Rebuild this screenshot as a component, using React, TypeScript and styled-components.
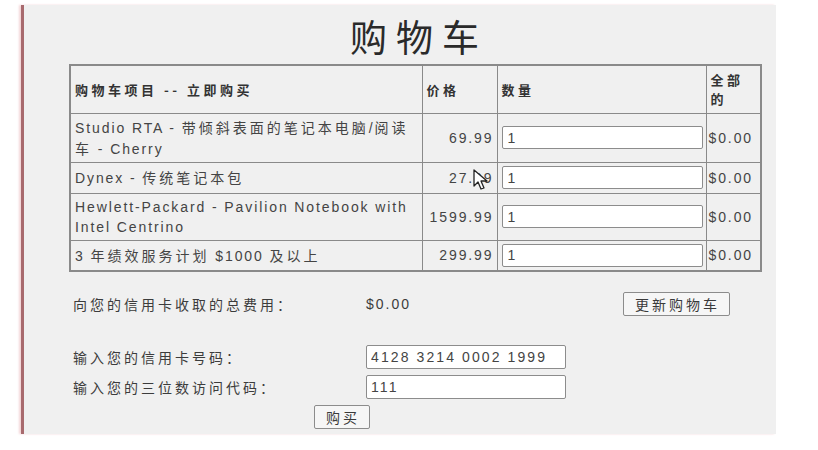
import React from "react";
import styled, { createGlobalStyle } from "styled-components";

const GlobalStyle = createGlobalStyle`
  html, body { margin: 0; padding: 0; background: #ffffff; }
  body { font-family: "Liberation Sans", "Noto Sans CJK SC", sans-serif; }
`;

const Page = styled.div`
  padding: 5px 0 0 21px;
  width: 818px;
  height: 450px;
  box-sizing: border-box;
`;

const Panel = styled.div`
  width: 755px;
  height: 429px;
  box-sizing: border-box;
  background: #f0f0f0;
  border-left: 3px solid #a86a6e;
  box-shadow: -2px 0 2px #f3d6d8;
  padding-left: 45px;
  color: #3c3c3c;
`;

const Content = styled.div`
  width: 691px;
`;

const Title = styled.h1`
  margin: 0;
  height: 59px;
  box-sizing: border-box;
  padding: 9px 0 0 9px;
  text-align: center;
  font-family: "Noto Sans CJK SC", sans-serif;
  font-weight: 400;
  font-size: 37px;
  line-height: 44px;
  letter-spacing: 9px;
  color: #2a2a2a;
`;

const Table = styled.table`
  width: 691px;
  border-collapse: collapse;
  border: 2px solid #8a8a8a;
  table-layout: fixed;
  font-size: 14px;
  letter-spacing: 1.9px;
`;

const Col = styled.col<{ $w: number }>`
  width: ${(p) => p.$w}px;
`;

const Row = styled.tr<{ $h: number }>`
  height: ${(p) => p.$h}px;
`;

const Th = styled.th`
  border: 1px solid #8a8a8a;
  text-align: left;
  padding: 0 4px;
  font-family: "Noto Sans CJK SC", sans-serif;
  font-weight: 700;
  font-size: 13px;
  line-height: 19px;
  letter-spacing: 3.5px;
  color: #333;
`;

const Td = styled.td<{ $align?: string; $pad?: string }>`
  border: 1px solid #8a8a8a;
  padding: ${(p) => p.$pad || "0 4px"};
  text-align: ${(p) => p.$align || "left"};
  line-height: 20px;
  color: #444;
  position: relative;
`;

const Cjk = styled.span`
  font-family: "Noto Sans CJK SC", sans-serif;
  letter-spacing: 3px;
`;

const QtyInput = styled.input`
  display: block;
  width: 100%;
  height: 23px;
  box-sizing: border-box;
  border: 1px solid #8c8c8c;
  border-radius: 2px;
  background: #fff;
  padding: 0 5px;
  font-family: "Liberation Sans", sans-serif;
  font-size: 14px;
  color: #444;
`;

const Cursor = styled.svg`
  position: absolute;
  left: 50px;
  top: 6px;
`;

const Form = styled.div`
  display: grid;
  grid-template-columns: 293px 200px 1fr;
  padding-left: 4px;
  margin-top: 20px;
  font-size: 14px;
  letter-spacing: 2px;
  color: #3c3c3c;
  align-items: center;
`;

const Label = styled.div`
  font-family: "Noto Sans CJK SC", sans-serif;
  font-size: 14px;
  letter-spacing: 3px;
`;

const Amount = styled.div`
  font-size: 14px;
`;

const Button = styled.button<{ $align?: string; $mr?: number }>`
  justify-self: ${(p) => p.$align || "start"};
  margin-right: ${(p) => p.$mr || 0}px;
  height: 24px;
  padding: 0 9px 0 11px;
  border: 1px solid #8c8c8c;
  border-radius: 2px;
  background: #f6f6f6;
  font-family: "Noto Sans CJK SC", sans-serif;
  font-size: 14px;
  letter-spacing: 3px;
  color: #3a3a3a;
`;

const FieldInput = styled.input`
  width: 200px;
  height: 24px;
  box-sizing: border-box;
  border: 1px solid #8c8c8c;
  border-radius: 2px;
  background: #fff;
  padding: 0 4px;
  font-family: "Liberation Sans", sans-serif;
  font-size: 14px;
  letter-spacing: 2.1px;
  color: #444;
`;

const Spacer = styled.div<{ $h: number }>`
  grid-column: 1 / -1;
  height: ${(p) => p.$h}px;
`;

const BuyRow = styled.div`
  grid-column: 1 / -1;
  padding-left: 241px;
  margin-top: 6px;
`;

function Mixed({ text }: { text: string }) {
  const parts = text.split(/([\u3000-\u9fff\uff00-\uffef]+)/);
  return (
    <>
      {parts.map((p, i) =>
        /[\u3000-\u9fff\uff00-\uffef]/.test(p) ? <Cjk key={i}>{p}</Cjk> : <React.Fragment key={i}>{p}</React.Fragment>
      )}
    </>
  );
}

const rows = [
  { name: "Studio RTA - 带倾斜表面的笔记本电脑/阅读车 - Cherry", price: "69.99", h: 49 },
  { name: "Dynex - 传统笔记本包", price: "27.99", h: 31, cursor: true },
  { name: "Hewlett-Packard - Pavilion Notebook with Intel Centrino", price: "1599.99", h: 47 },
  { name: "3 年绩效服务计划 $1000 及以上", price: "299.99", h: 31 },
];

export default function App() {
  return (
    <>
      <GlobalStyle />
      <Page>
        <Panel>
          <Content>
            <Title>购物车</Title>
            <Table>
              <colgroup>
                <Col $w={352} />
                <Col $w={75} />
                <Col $w={209} />
                <Col $w={55} />
              </colgroup>
              <thead>
                <Row $h={48}>
                  <Th>购物车项目 -- 立即购买</Th>
                  <Th>价格</Th>
                  <Th>数量</Th>
                  <Th>全部的</Th>
                </Row>
              </thead>
              <tbody>
                {rows.map((r) => (
                  <Row $h={r.h} key={r.name}>
                    <Td>
                      <Mixed text={r.name} />
                    </Td>
                    <Td $align="right" $pad="0 3px 0 2px">
                      {r.price}
                      {r.cursor && (
                        <Cursor width="20" height="24" viewBox="0 0 20 24">
                          <path
                            d="M1 1 L1 17 L5 13 L8 20 L11 19 L8 12 L14 12 Z"
                            fill="#fff"
                            stroke="#222"
                            strokeWidth="1.3"
                            strokeLinejoin="round"
                          />
                        </Cursor>
                      )}
                    </Td>
                    <Td $pad="0 3px 0 4px">
                      <QtyInput defaultValue="1" />
                    </Td>
                    <Td $pad="0 2px 0 2px">$0.00</Td>
                  </Row>
                ))}
              </tbody>
            </Table>
            <Form>
              <Label>向您的信用卡收取的总费用：</Label>
              <Amount>$0.00</Amount>
              <Button $align="end" $mr={30}>更新购物车</Button>
              <Spacer $h={29} />
              <Label>输入您的信用卡号码：</Label>
              <FieldInput defaultValue="4128 3214 0002 1999" />
              <div />
              <Spacer $h={6} />
              <Label>输入您的三位数访问代码：</Label>
              <FieldInput defaultValue="111" />
              <div />
              <BuyRow>
                <Button>购买</Button>
              </BuyRow>
            </Form>
          </Content>
        </Panel>
      </Page>
    </>
  );
}
